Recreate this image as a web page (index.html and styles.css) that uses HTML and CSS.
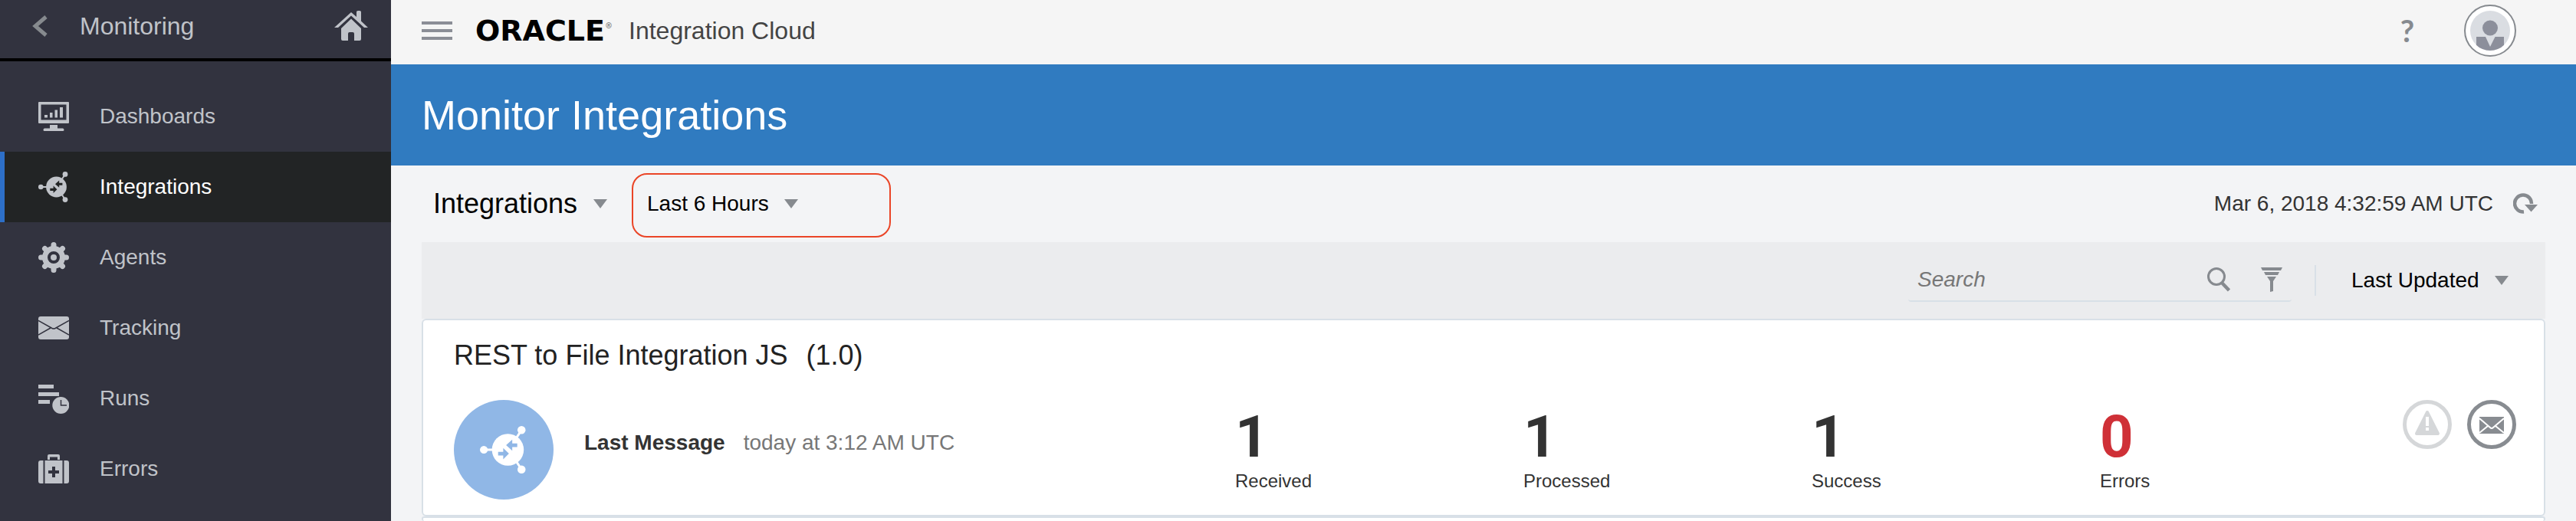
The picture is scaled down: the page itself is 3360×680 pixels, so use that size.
FILE: index.html
```html
<!DOCTYPE html>
<html lang="en">
<head>
<meta charset="utf-8">
<title>Monitor Integrations</title>
<meta name="viewport" content="width=device-width, initial-scale=1">
<link rel="stylesheet" href="styles.css">
</head>
<body>
<svg class="defs" aria-hidden="true">
  <symbol id="integration" viewBox="0 0 40 40">
    <path d="M3 20H14M34 5L28 14M34 35L28 26" fill="none" stroke="currentColor" stroke-width="2"/>
    <circle cx="23.5" cy="20" r="13.4" fill="currentColor"/>
    <circle cx="3.3" cy="20" r="3.3" fill="currentColor"/>
    <circle cx="35" cy="3.4" r="3.4" fill="currentColor"/>
    <circle cx="35" cy="36.6" r="3.4" fill="currentColor"/>
    <path class="cut" d="M22 16.200L27.200 11.500V14.700H31.400V17.800H27.200V20.800ZM24.400 23.300L19.600 28V24.900H15.300V21.700H19.600V18.600Z"/>
  </symbol>
  <symbol id="triangle" viewBox="0 0 18 12"><path d="M0 0H18L9 12Z" fill="currentColor"/></symbol>
</svg>
<div class="app">
  <aside class="sidebar">
    <div class="side-head">
      <button class="icon-button" aria-label="Back">
        <svg width="20" height="28" viewBox="0 0 20 28"><path d="M18 2L4 14L18 26" fill="none" stroke="#868a8e" stroke-width="5"/></svg>
      </button>
      <span class="side-title">Monitoring</span>
      <a href="#home" aria-label="Home">
        <svg width="44" height="40" viewBox="0 0 44 40"><path d="M0 22L22 2L29 8V1.500Q29 0 31 0H33Q35 0 35 1.500V13.500L44 22H39L22 6.500L5 22ZM9 23L22 10.500L35 23V37Q35 39 33 39H26V30Q26 28 24 28H20Q18 28 18 30V39H11Q9 39 9 37Z" fill="currentColor"/></svg>
      </a>
    </div>
    <nav class="side-nav">
      <a class="nav-item" href="#dashboards">
        <svg width="40" height="40" viewBox="0 0 40 40"><path fill="currentColor" fill-rule="evenodd" d="M1 1H39Q40 1 40 2V28Q40 29 39 29H1Q0 29 0 28V2Q0 1 1 1ZM3.500 4.500V24.500H36.500V4.500ZM8 18H12V21.500H8ZM15 15H18.500V21.500H15ZM21.500 11.500H25V21.500H21.500ZM28 8H32V21.500H28ZM15 31H25V35.500H32Q33.500 36 33.500 37.500Q33.500 39 32 39H8Q6.500 39 6.500 37.500Q6.500 36 8 35.500H15Z"/></svg>
        Dashboards</a>
      <a class="nav-item active" href="#integrations" aria-current="page">
        <svg width="40" height="40"><use href="#integration"/></svg>
        Integrations</a>
      <a class="nav-item" href="#agents">
        <svg width="40" height="40" viewBox="0 0 40 40" fill="none" stroke="currentColor"><circle cx="20" cy="20" r="11.500" stroke-width="7"/><circle cx="20" cy="20" r="4" fill="currentColor" stroke="none"/><path stroke-width="7" stroke-linecap="round" d="M20 8V3.500M20 32V36.500M8 20H3.500M32 20H36.500M11.500 11.500L8.500 8.500M28.500 28.500L31.500 31.500M11.500 28.500L8.500 31.500M28.500 11.500L31.500 8.500"/></svg>
        Agents</a>
      <a class="nav-item" href="#tracking">
        <svg width="40" height="40" viewBox="0 0 40 40"><rect y="5" width="40" height="30" rx="3" fill="currentColor"/><path class="line" d="M0 10.500L18 20.500Q20 21.500 22 20.500L40 10.500M0 29L16 20M40 29L24 20"/></svg>
        Tracking</a>
      <a class="nav-item" href="#runs">
        <svg width="40" height="40" viewBox="0 0 40 40"><path d="M0 2H20V7H0ZM0 12H27V17H0ZM0 22H15V27H0Z" fill="currentColor"/><circle cx="29.300" cy="29" r="11" fill="currentColor"/><path class="line" d="M29.500 22V29H37"/></svg>
        Runs</a>
      <a class="nav-item" href="#errors">
        <svg width="40" height="40" viewBox="0 0 40 40"><path d="M12 8V3Q12 1 14 1H26Q28 1 28 3V8H25V4.500H15V8ZM3 9H6.500V39H3Q0 39 0 36V12Q0 9 3 9ZM8.500 9H31.500V39H8.500ZM33.500 9H37Q40 9 40 12V36Q40 39 37 39H33.500Z" fill="currentColor"/><path class="cut" d="M18 17H22V22H27V26H22V31H18V26H13V22H18Z"/></svg>
        Errors</a>
    </nav>
  </aside>

  <main class="main">
    <header class="topbar">
      <button class="icon-button" aria-label="Toggle menu">
        <svg width="40" height="24" viewBox="0 0 40 24"><path d="M0 2H40M0 12H40M0 22H40" stroke="#8b8e96" stroke-width="4"/></svg>
      </button>
      <span class="logo">ORACLE<sup class="reg">®</sup></span>
      <span class="product">Integration Cloud</span>
      <button class="icon-button help" aria-label="Help">?</button>
      <button class="icon-button avatar" aria-label="Account">
        <svg width="52" height="52" viewBox="0 0 52 52"><defs><clipPath id="face"><circle cx="26" cy="26" r="26"/></clipPath></defs><g clip-path="url(#face)"><path fill="#dadde2" d="M0 0H52V52H0Z"/><circle cx="26" cy="22.500" r="10" fill="#8c8f9b"/><path fill="#8c8f9b" d="M8 34H20L26 47L32.500 34H44V52H8Z"/></g></svg>
      </button>
    </header>

    <div class="banner"><h1>Monitor Integrations</h1></div>

    <section class="content">
      <div class="filters">
        <div class="select-wrap large">
          <select aria-label="View"><option>Integrations</option></select>
          <svg class="caret"><use href="#triangle"/></svg>
        </div>
        <div class="period">
          <div class="select-wrap">
            <select aria-label="Time period"><option>Last 6 Hours</option></select>
            <svg class="caret"><use href="#triangle"/></svg>
          </div>
        </div>
        <time class="stamp" datetime="2018-03-06T04:32:59Z">Mar 6, 2018 4:32:59 AM UTC</time>
        <button class="icon-button" aria-label="Refresh">
          <svg width="32" height="28" viewBox="0 0 32 28"><path d="M14 24.500A11 11 0 1 1 24 14" fill="none" stroke="currentColor" stroke-width="4.500"/><path d="M15 15H32L23.500 24.500Z" fill="currentColor"/></svg>
        </button>
      </div>

      <div class="toolbar">
        <div class="search">
          <input type="text" placeholder="Search" aria-label="Search">
          <button class="icon-button" aria-label="Search">
            <svg width="30" height="32" viewBox="0 0 30 32"><circle cx="12" cy="12" r="10.500" fill="none" stroke="currentColor" stroke-width="3"/><path d="M19 20L28.500 30" stroke="currentColor" stroke-width="4.500"/></svg>
          </button>
          <button class="icon-button" aria-label="Filter">
            <svg width="28" height="32" viewBox="0 0 28 32"><path d="M0 0H28L26 4H2ZM4 6H24L22 10H6ZM8 12H20L16 18V31L12 32V18Z" fill="currentColor"/></svg>
          </button>
        </div>
        <span class="divider"></span>
        <div class="select-wrap">
          <select aria-label="Sort by"><option>Last Updated</option></select>
          <svg class="caret"><use href="#triangle"/></svg>
        </div>
      </div>

      <article class="card">
        <h2><span>REST to File Integration JS</span><span>(1.0)</span></h2>
        <div class="card-row">
          <div class="summary">
            <span class="badge"><svg width="62" height="64"><use href="#integration"/></svg></span>
            <p class="message"><strong>Last Message</strong><span>today at 3:12 AM UTC</span></p>
          </div>
          <div class="stat"><b>1</b><span>Received</span></div>
          <div class="stat"><b>1</b><span>Processed</span></div>
          <div class="stat"><b>1</b><span>Success</span></div>
          <div class="stat failed"><b>0</b><span>Errors</span></div>
          <div class="actions">
            <button class="icon-button" aria-label="View errors" disabled>
              <svg width="64" height="64" viewBox="0 0 64 64"><circle cx="32" cy="32" r="29.500" fill="none" stroke="#d5d7d9" stroke-width="5"/><path d="M32 16L46 44H18Z" fill="#d5d7d9" stroke="#d5d7d9" stroke-width="4" stroke-linejoin="round"/><path d="M30 22H34V34H30ZM30 36H34V40H30Z" fill="#fff"/></svg>
            </button>
            <button class="icon-button" aria-label="Track instances">
              <svg width="64" height="64" viewBox="0 0 64 64"><circle cx="32" cy="32" r="29.500" fill="none" stroke="#888c91" stroke-width="5"/><path d="M16 22H48V44H16Z" fill="#888c91"/><path d="M16 24L30 36Q32 38 34 36L48 24M16 43L27 34M48 43L37 34" fill="none" stroke="#fff" stroke-width="2"/></svg>
            </button>
          </div>
        </div>
      </article>
      <article class="card next"></article>
    </section>
  </main>
</div>
</body>
</html>
```
FILE: styles.css
```css
* { box-sizing: border-box; }

body {
  margin: 0;
  background: #f3f4f6;
  color: #333;
  font: 28px/32px "Liberation Sans", Arial, sans-serif;
}

h1, h2, p { margin: 0; font-weight: 400; }
a { color: inherit; text-decoration: none; }
svg { display: block; flex: none; }
.defs { position: absolute; width: 0; height: 0; }

.icon-button {
  flex: none;
  padding: 0;
  border: 0;
  background: none;
  color: #868a8f;
  font: inherit;
  cursor: pointer;
}

.app {
  display: grid;
  grid-template-columns: 510px minmax(0, 1fr);
  min-height: 100vh;
}

/* Sidebar */
.sidebar { background: #32333f; color: #c0c3c9; --surface: #32333f; }

.side-head {
  display: flex;
  align-items: center;
  height: 80px;
  padding: 0 30px 8px 42px;
  border-bottom: 4px solid #000;
}
.side-title { flex: 1; padding-left: 42px; font-size: 32px; }

.side-nav { padding-top: 26px; }
.nav-item {
  display: flex;
  align-items: center;
  gap: 40px;
  height: 92px;
  padding-left: 44px;
  border-left: 6px solid transparent;
}
.nav-item.active {
  --surface: #222425;
  border-left-color: #2d6fc8;
  background: #222425;
  color: #fff;
}
.nav-item.active svg { color: #c0c3c9; }
.cut { fill: var(--surface); }
.line { fill: none; stroke: var(--surface); stroke-width: 1.5; }

/* Header */
.main { display: flex; flex-direction: column; }

.topbar {
  display: flex;
  align-items: center;
  height: 84px;
  padding: 0 78px 4px 40px;
  background: #f5f5f5;
}
.logo {
  width: 200px;
  margin-left: 30px;
  color: #000;
  font: bold 38px/40px "DejaVu Sans", sans-serif;
}
.reg { font-size: 10px; line-height: 10px; vertical-align: 16px; color: #888; }
.product { font-size: 32px; line-height: 36px; color: #444; }
.help {
  width: 24px;
  margin: 0 62px 0 auto;
  font: bold 40px/40px Lato, sans-serif;
}
.avatar {
  display: grid;
  place-items: center;
  width: 68px;
  height: 68px;
  border: 2px solid #868a8f;
  border-radius: 50%;
  background: #fff;
}

.banner {
  display: flex;
  align-items: center;
  height: 132px;
  padding: 0 40px;
  background: #307bc0;
  color: #fff;
}
.banner h1 { font-size: 54px; line-height: 60px; }

/* Filters */
.content { display: flex; flex: 1; flex-direction: column; padding: 0 40px; }

.filters {
  display: flex;
  align-items: center;
  height: 100px;
  padding: 0 10px 0 15px;
}
.select-wrap { position: relative; display: flex; align-items: center; }
.select-wrap select {
  appearance: none;
  margin: 0;
  padding: 0 38px 0 0;
  border: 0;
  background: none;
  color: #000;
  font: inherit;
}
.large { font-size: 36px; line-height: 40px; }
.caret {
  position: absolute;
  right: 0;
  width: 18px;
  height: 12px;
  color: #868a8f;
  pointer-events: none;
}
.period {
  display: flex;
  align-items: center;
  width: 338px;
  height: 84px;
  margin: 4px 0 0 32px;
  padding: 0 18px 4px;
  border: 2px solid #ea4527;
  border-radius: 20px;
}
.stamp { margin: 0 26px 0 auto; }

.toolbar {
  display: flex;
  align-items: center;
  justify-content: flex-end;
  height: 100px;
  padding-right: 48px;
  background: #ebecee;
}
.search {
  display: flex;
  align-items: center;
  gap: 40px;
  width: 500px;
  height: 56px;
  padding: 0 12px;
  border-bottom: 2px solid #d8e0e7;
  border-radius: 4px;
}
.search input {
  flex: 1;
  min-width: 0;
  padding: 0;
  border: 0;
  outline: 0;
  background: none;
  color: #333;
  font: inherit;
}
.search input::placeholder { color: #777; font-style: italic; opacity: 1; }
.divider { width: 2px; height: 40px; margin: 0 46px 0 30px; background: #d8e0e7; }

/* Integration cards */
.card {
  padding: 24px 36px 20px 40px;
  border: 2px solid #d8e0e7;
  border-radius: 6px;
  background: #fff;
}
.card.next { flex: 1; padding: 0; border-bottom: 0; }
.card h2 {
  display: flex;
  gap: 24px;
  margin-bottom: 36px;
  color: #222;
  font-size: 36px;
  line-height: 44px;
}
.card-row { display: grid; grid-template-columns: 1019fr repeat(4, 376fr) 167fr; align-items: center; }
.summary { display: flex; align-items: center; gap: 40px; }
.badge {
  --surface: #90b7e6;
  display: grid;
  place-items: center;
  width: 130px;
  height: 130px;
  border-radius: 50%;
  background: #90b7e6;
  color: #fff;
}
.message { display: flex; gap: 24px; padding-bottom: 18px; color: #777; }
.message strong { color: #333; }

.stat { display: grid; gap: 6px; }
.stat b { font: bold 76px/76px Roboto, sans-serif; }
.stat span { font-size: 24px; line-height: 28px; }
.failed b { color: #cf3037; }

.actions { display: flex; align-self: start; justify-content: flex-end; gap: 20px; }
```
